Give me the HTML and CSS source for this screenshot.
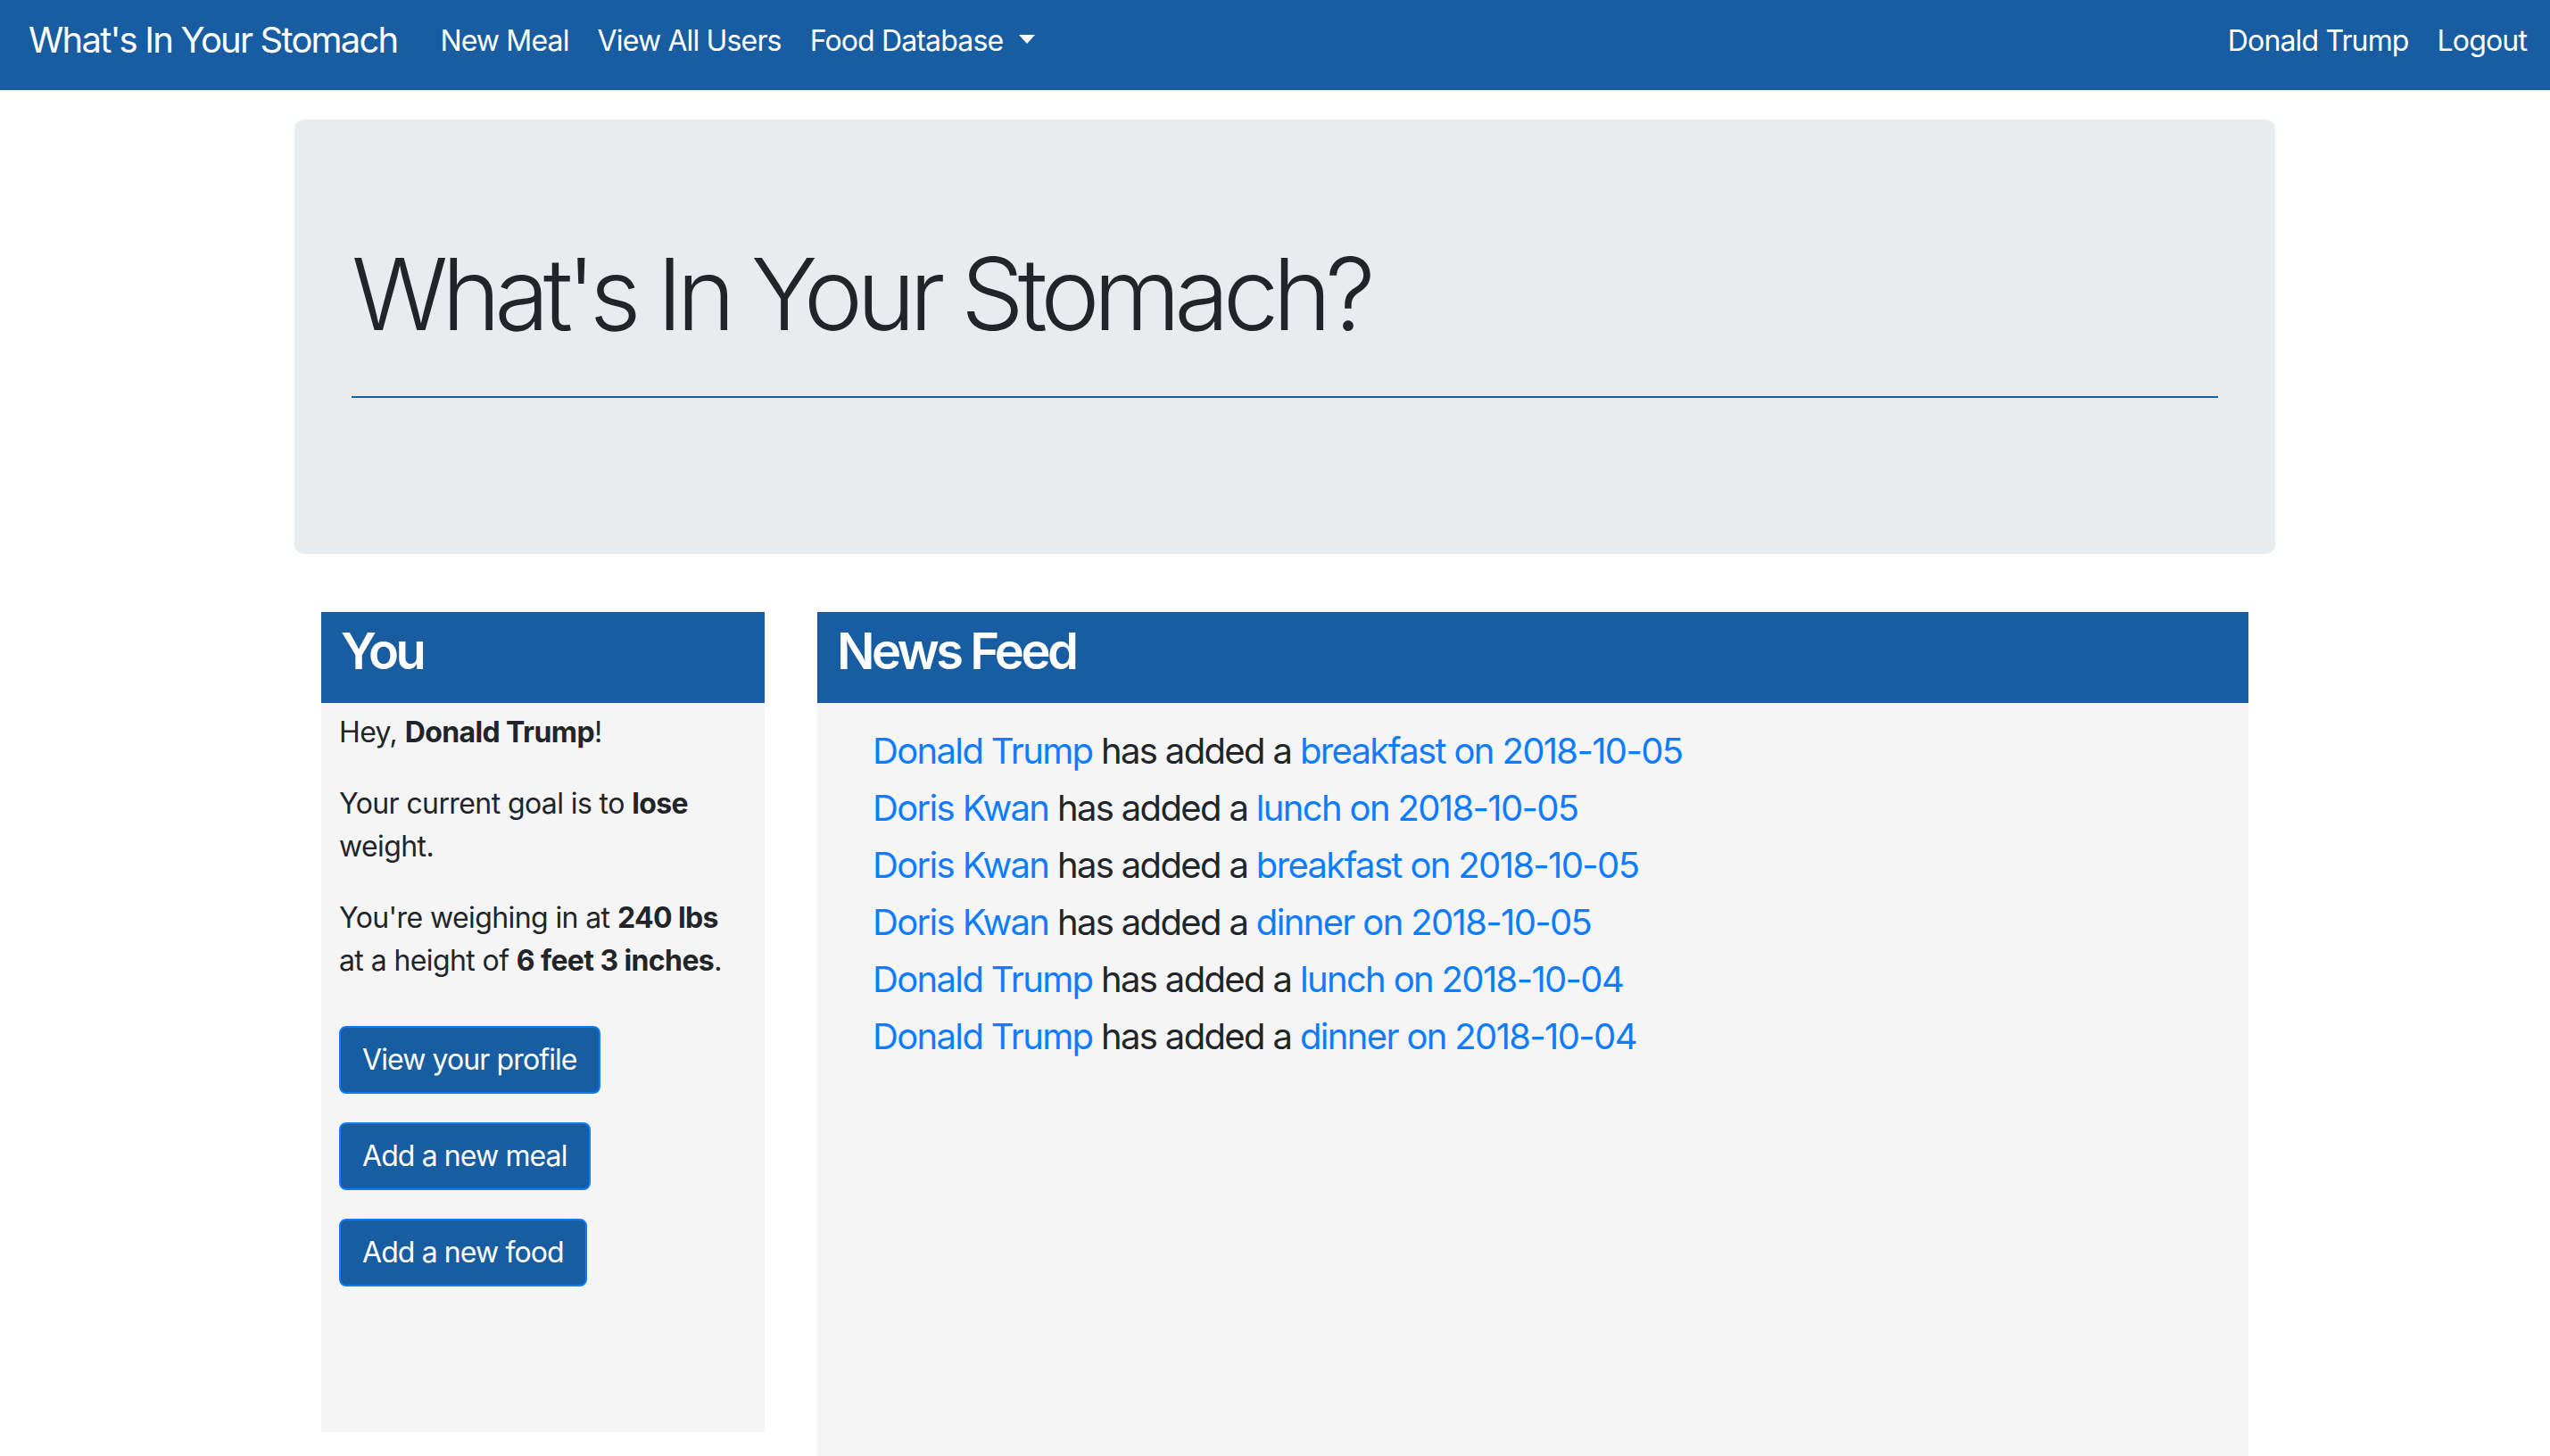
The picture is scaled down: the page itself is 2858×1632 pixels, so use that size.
FILE: index.html
```html
<!DOCTYPE html>
<html lang="en">
<head>
<meta charset="utf-8">
<title>What's In Your Stomach</title>
<link rel="stylesheet" href="styles.css">
</head>
<body>
<nav class="navbar">
  <a class="brand" href="#">What's In Your Stomach</a>
  <ul class="nav-links">
    <li><a class="nav-link" href="#">New Meal</a></li>
    <li><a class="nav-link" href="#">View All Users</a></li>
    <li><a class="nav-link dropdown-toggle" href="#">Food Database</a></li>
  </ul>
  <ul class="nav-links nav-right">
    <li><a class="nav-link" href="#">Donald Trump</a></li>
    <li><a class="nav-link" href="#">Logout</a></li>
  </ul>
</nav>

<div class="container">
  <div class="jumbotron">
    <h1 class="display">What's In Your Stomach?</h1>
    <hr class="rule">
  </div>

  <div class="cards">
    <section class="card card-you">
      <div class="card-header"><h3>You</h3></div>
      <div class="card-body">
        <p>Hey, <b>Donald Trump</b>!</p>
        <p>Your current goal is to <b>lose</b> weight.</p>
        <p>You're weighing in at <b>240 lbs</b> at a height of <b>6 feet 3 inches</b>.</p>
        <div class="actions">
          <a class="btn" href="#">View your profile</a>
          <a class="btn" href="#">Add a new meal</a>
          <a class="btn" href="#">Add a new food</a>
        </div>
      </div>
    </section>

    <section class="card card-feed">
      <div class="card-header"><h3>News Feed</h3></div>
      <div class="card-body feed-body">
        <ul class="feed">
          <li><a href="#">Donald Trump</a> has added a <a href="#">breakfast on 2018-10-05</a></li>
          <li><a href="#">Doris Kwan</a> has added a <a href="#">lunch on 2018-10-05</a></li>
          <li><a href="#">Doris Kwan</a> has added a <a href="#">breakfast on 2018-10-05</a></li>
          <li><a href="#">Doris Kwan</a> has added a <a href="#">dinner on 2018-10-05</a></li>
          <li><a href="#">Donald Trump</a> has added a <a href="#">lunch on 2018-10-04</a></li>
          <li><a href="#">Donald Trump</a> has added a <a href="#">dinner on 2018-10-04</a></li>
        </ul>
      </div>
    </section>
  </div>
</div>
</body>
</html>
```

FILE: styles.css
```css
* { box-sizing: border-box; }

html, body {
  margin: 0;
  overflow: hidden;
}

body {
  font-family: Inter, "Noto Sans", "Liberation Sans", sans-serif;
  font-size: 32px;
  line-height: 48px;
  letter-spacing: -0.6px;
  color: #212529;
  background: #ffffff;
}

a { text-decoration: none; }

/* Navbar */
.navbar {
  display: flex;
  align-items: flex-start;
  height: 101px;
  padding: 15px 10px 0 32px;
  background: #185ca1;
}

.brand {
  color: #ffffff;
  font-size: 40px;
  line-height: 60px;
  letter-spacing: -1.8px;
  margin-right: 32px;
}

.nav-links {
  display: flex;
  list-style: none;
  margin: 7px 0 0;
  padding: 0;
}

.nav-right { margin-left: auto; }

.nav-link {
  display: block;
  color: #ffffff;
  font-size: 32px;
  line-height: 48px;
  letter-spacing: -0.85px;
  padding: 0 16px;
}

.dropdown-toggle::after {
  content: "";
  display: inline-block;
  margin-left: 18px;
  vertical-align: 8px;
  border-top: 10px solid #ffffff;
  border-left: 9px solid transparent;
  border-right: 9px solid transparent;
}

/* Container */
.container {
  width: 2220px;
  margin-left: 330px;
}

.jumbotron {
  margin-top: 33px;
  height: 487px;
  padding: 128px 64px;
  background: #e9ecef;
  border-radius: 10px;
}

.display {
  margin: 0;
  font-size: 112px;
  font-weight: 300;
  line-height: 1.2;
  letter-spacing: -7px;
}

.rule {
  margin: 48px 0 0;
  border: 0;
  border-top: 2px solid #185ca1;
}

/* Cards */
.cards {
  display: flex;
  align-items: flex-start;
  gap: 59px;
  margin-top: 65px;
  padding: 0 30px;
}

.card-you { width: 497px; flex: none; }
.card-feed { flex: 1; }

.card-header {
  height: 102px;
  padding: 11px 22px 0;
  background: #185ca1;
  color: #ffffff;
}

.card-header h3 {
  margin: 0;
  font-size: 56px;
  font-weight: 600;
  line-height: 1.2;
  letter-spacing: -3.5px;
}

.card-body {
  background: #f5f5f5;
  padding: 9px 20px 0;
  height: 817px;
}

.card-body p { margin: 0 0 32px; }

.card-body b { font-weight: 700; }

.actions {
  display: flex;
  flex-direction: column;
  align-items: flex-start;
  gap: 32px;
  margin-top: 49px;
}

.btn {
  display: inline-block;
  padding: 12px 24px;
  font-size: 32px;
  line-height: 48px;
  letter-spacing: -0.9px;
  color: #ffffff;
  background: #185ca1;
  border: 2px solid #0f7dfb;
  border-radius: 8px;
}

.feed-body {
  height: 900px;
  padding: 22px 0 0 62px;
}

.feed {
  list-style: none;
  margin: 0;
  padding: 0;
  font-size: 40px;
  line-height: 64px;
  letter-spacing: -1.65px;
}

.feed a { color: #0f7dfb; }
```
